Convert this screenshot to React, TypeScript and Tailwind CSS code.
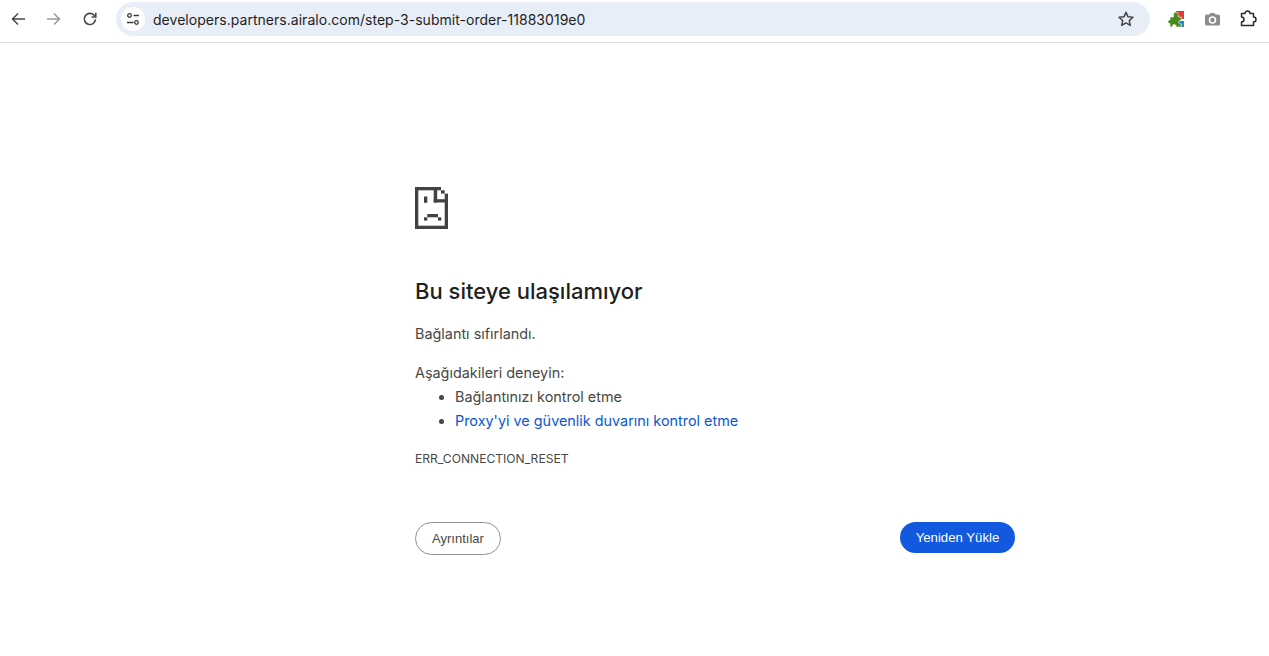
import React from "react";

function SadIcon() {
  return (
    <svg width="33" height="42" viewBox="0 0 33 42" fill="#424242">
      <rect x="0" y="0" width="26" height="3.3" />
      <rect x="0" y="0" width="3.3" height="42" />
      <rect x="0" y="38.7" width="33" height="3.3" />
      <rect x="29.7" y="6.6" width="3.3" height="35.400" />
      <rect x="26" y="3.3" width="3.700" height="3.3" />
      <rect x="18.700" y="0" width="3.500" height="15.500" />
      <rect x="18.700" y="12.200" width="14.300" height="3.300" />
      <rect x="9" y="9.500" width="3.300" height="6.300" />
      <rect x="12.300" y="27" width="10.700" height="3.300" />
      <rect x="9" y="30.300" width="3.300" height="3.300" />
      <rect x="23" y="30.300" width="3.300" height="3.300" />
    </svg>
  );
}

export default function App() {
  return (
    <div className="w-[1269px] h-[656px] bg-white overflow-hidden flex flex-col font-['Inter',sans-serif]">
      <div className="h-[43px] shrink-0 border-b border-[#e0e0e0] flex items-start pt-[2px] pl-[8px] pr-[11px]">
        <div className="h-[34px] flex items-center ml-[1px]">
          <svg width="18" height="18" viewBox="0 0 18 18" fill="none" stroke="#474747" strokeWidth="1.5">
            <path d="M16 9H3.500M9 3.500L3.500 9L9 14.500" />
          </svg>
        </div>
        <div className="h-[34px] flex items-center ml-[18px]">
          <svg width="18" height="18" viewBox="0 0 18 18" fill="none" stroke="#9a9a9a" strokeWidth="1.5">
            <path d="M2 9h12.500M9 3.500L14.500 9L9 14.500" />
          </svg>
        </div>
        <div className="h-[34px] flex items-center ml-[18px]">
          <svg width="18" height="18" viewBox="0 0 18 18" fill="none" stroke="#474747" strokeWidth="1.6">
            <path d="M14.500 9.300A5.600 5.600 0 1 1 12.900 5L14.700 6.800" />
            <path d="M14.800 2.800v4.200H10.600" />
          </svg>
        </div>
        <div className="ml-[17px] w-[1034px] h-[34px] rounded-full bg-[#e8eef8] flex items-center pl-[5px] pr-[15px]">
          <div className="w-[24px] h-[24px] rounded-full bg-white flex items-center justify-center">
            <svg width="16" height="16" viewBox="0 0 16 16" fill="none" stroke="#3c3c3c" strokeWidth="1.3">
              <circle cx="4.500" cy="4.500" r="1.800" />
              <path d="M8.500 4.500H14M2 11.500h6.500" />
              <circle cx="11.500" cy="11.500" r="1.800" />
            </svg>
          </div>
          <span className="ml-[8px] text-[14px] tracking-[0.03px] text-[#1f1f1f] whitespace-nowrap">
            developers.partners.airalo.com/step-3-submit-order-11883019e0
          </span>
          <svg className="ml-auto" width="18" height="18" viewBox="0 0 24 24" fill="none" stroke="#474747" strokeWidth="2" strokeLinejoin="round">
            <path d="M12 3l2.700 6.100 6.600.6-5 4.400 1.500 6.500L12 17.200 6.200 20.600l1.500-6.500-5-4.400 6.600-.6z" />
          </svg>
        </div>
        <div className="h-[34px] ml-[16px] w-[20px] flex items-center justify-center">
          <svg width="18" height="18" viewBox="0 0 18 18">
            <path d="M9 1h8v8h-8z" fill="#e53935" />
            <path d="M12 11h5v6h-5z" fill="#1e88e5" />
            <path d="M3 7h3.500V4.500a2.400 2.400 0 0 1 4.800 0V7h3v3.500h-1.500a2 2 0 0 0 0 3.500h1.500V17H9v-1.500a2 2 0 0 0-3.500 0V17H3v-3.500H2a2 2 0 0 1 0-3.500h1z" fill="#4a8a1c" stroke="#fff" strokeWidth="0.6" />
          </svg>
        </div>
        <div className="h-[34px] ml-[16px] w-[20px] flex items-center justify-center">
          <svg width="17" height="17" viewBox="0 0 17 17">
            <path d="M2.500 3.500H5.500L6.500 2h4l1 1.500h3a1.500 1.500 0 0 1 1.500 1.500v8a1.500 1.500 0 0 1-1.500 1.500h-12A1.500 1.500 0 0 1 1 13V5a1.500 1.500 0 0 1 1.500-1.500z" fill="#8c8c8c" />
            <circle cx="8.500" cy="9" r="3" fill="none" stroke="#fff" strokeWidth="1.600" />
          </svg>
        </div>
        <div className="h-[34px] ml-[16px] w-[20px] flex items-center justify-center">
          <svg width="18" height="18" viewBox="0 0 18 18" fill="none" stroke="#2a2a2a" strokeWidth="1.500" strokeLinejoin="round">
            <path d="M2.500 3.500H6a2.500 2.500 0 0 1 5 0h3.500V7a2.500 2.500 0 0 1 0 5v3.500H2.500V12a2.500 2.500 0 0 0 0-5z" />
          </svg>
        </div>
      </div>

      <div className="flex-1 pl-[415px] pt-[144px] w-[1015px]">
        <SadIcon />
        <h1 className="mt-[44px] text-[22px] leading-[36px] font-medium text-[#1f1f1f]">Bu siteye ulaşılamıyor</h1>
        <p className="mt-[13px] text-[14.4px] leading-[24px] text-[#474747]">Bağlantı sıfırlandı.</p>
        <p className="mt-[15px] text-[14.4px] leading-[24px] text-[#474747]">Aşağıdakileri deneyin:</p>
        <ul className="list-disc pl-[40px] text-[14.4px] leading-[24px] text-[#474747]">
          <li>Bağlantınızı kontrol etme</li>
          <li className="marker:text-[#474747] text-[#0b57d0]">Proxy'yi ve güvenlik duvarını kontrol etme</li>
        </ul>
        <p className="mt-[17px] text-[12.1px] leading-[18px] text-[#474747]">ERR_CONNECTION_RESET</p>
        <div className="mt-[54px] flex justify-between items-start font-['Liberation_Sans',sans-serif]">
          <button className="w-[86px] h-[33px] rounded-full border border-[#8f9096] bg-white text-[13px] text-[#474747]">Ayrıntılar</button>
          <button className="w-[115px] h-[31px] rounded-full bg-[#1259e0] text-[13.2px] text-white">Yeniden Yükle</button>
        </div>
      </div>
    </div>
  );
}
